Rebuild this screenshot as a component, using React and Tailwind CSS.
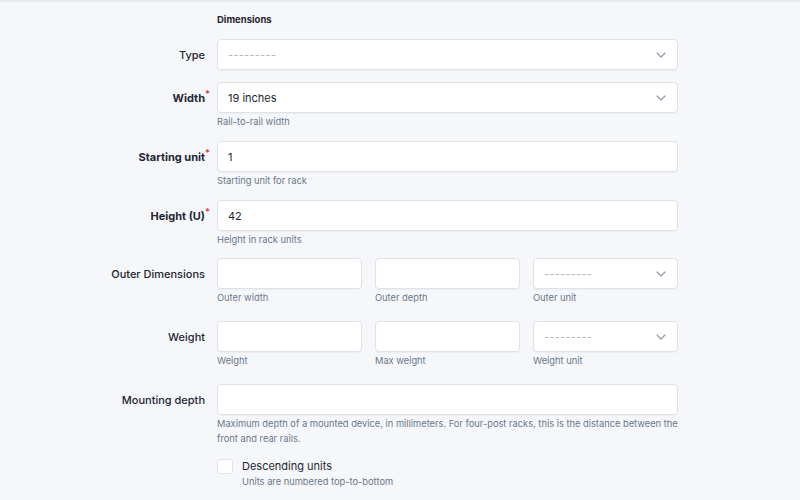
// Rack form — Dimensions section

const FONT = { fontFamily: 'Inter, "Noto Sans", sans-serif' }

function Chevron() {
  return (
    <svg width="10" height="6" viewBox="0 0 10 6" fill="none" className="shrink-0">
      <path d="M1 1l4 4 4-4" stroke="#939eae" strokeWidth="1.2" strokeLinecap="round" strokeLinejoin="round" />
    </svg>
  )
}

function Box({ children, select, placeholder }) {
  return (
    <div className="flex h-[31px] w-full items-center justify-between rounded-[4px] border border-[#dfe3e8] bg-white pl-[10px] pr-[11px] text-[11px] text-[#1e2632] shadow-[0_1px_1px_rgba(0,0,0,0.04)]">
      {placeholder ? <span className="tracking-[0.3px] text-[#b0b6bf]">{placeholder}</span> : <span>{children}</span>}
      {select && <Chevron />}
    </div>
  )
}

function Help({ children }) {
  return <p className="mt-px text-[9.3px] leading-[15px] text-[#687789]">{children}</p>
}

function Row({ label, required, mb = 'mb-3', children }) {
  return (
    <div className={`flex ${mb}`}>
      <div className="flex h-[31px] w-[217px] shrink-0 items-center justify-end pr-[12px]">
        <span className={`relative text-[11px] text-[#1e2632] ${required ? 'font-bold' : 'font-medium'}`}>
          {label}
          {required && (
            <span className="absolute -top-[3px] left-full text-[9px] font-bold text-[#e03b3b]">*</span>
          )}
        </span>
      </div>
      <div className="w-[461px]">{children}</div>
    </div>
  )
}

export default function App() {
  return (
    <div style={FONT} className="min-h-[500px] w-[800px] border-t-2 border-[#e8eaee] bg-[#f6f7fb]">
      <div className="pl-[217px] pt-[11px] pb-[12px] text-[9.5px] font-bold text-[#1e2632]">Dimensions</div>

      <Row label="Type">
        <Box select placeholder="---------" />
      </Row>

      <Row label="Width" required>
        <Box select>19 inches</Box>
        <Help>Rail-to-rail width</Help>
      </Row>

      <Row label="Starting unit" required>
        <Box>1</Box>
        <Help>Starting unit for rack</Help>
      </Row>

      <Row label="Height (U)" required mb="mb-[11px]">
        <Box>42</Box>
        <Help>Height in rack units</Help>
      </Row>

      <Row label="Outer Dimensions" mb="mb-4">
        <div className="grid grid-cols-3 gap-x-[13px]">
          <div><Box /><Help>Outer width</Help></div>
          <div><Box /><Help>Outer depth</Help></div>
          <div><Box select placeholder="---------" /><Help>Outer unit</Help></div>
        </div>
      </Row>

      <Row label="Weight" mb="mb-4">
        <div className="grid grid-cols-3 gap-x-[13px]">
          <div><Box /><Help>Weight</Help></div>
          <div><Box /><Help>Max weight</Help></div>
          <div><Box select placeholder="---------" /><Help>Weight unit</Help></div>
        </div>
      </Row>

      <Row label="Mounting depth">
        <Box />
        <Help>
          Maximum depth of a mounted device, in millimeters. For four-post racks, this is the distance between the
          front and rear rails.
        </Help>
      </Row>

      <div className="flex pl-[217px]">
        <div className="mt-px h-[15px] w-[16px] shrink-0 rounded-[3px] border border-[#dfe3e8] bg-white" />
        <div className="ml-[9px]">
          <div className="text-[11px] leading-[16px] text-[#1e2632]">Descending units</div>
          <div className="text-[9.3px] leading-[15px] text-[#687789]">Units are numbered top-to-bottom</div>
        </div>
      </div>
    </div>
  )
}
